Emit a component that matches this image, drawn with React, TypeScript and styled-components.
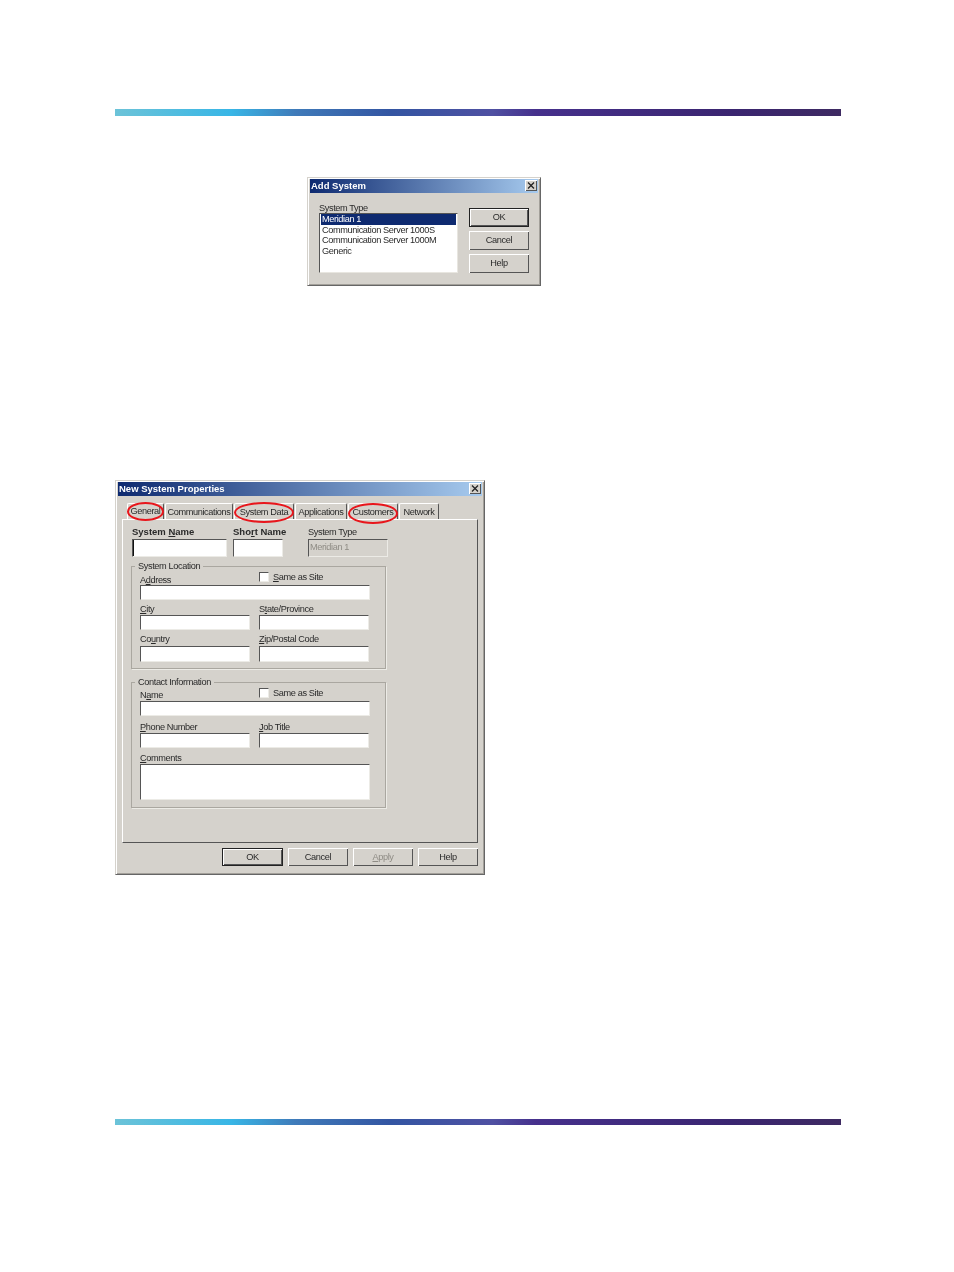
import React from 'react'
import styled, { createGlobalStyle } from 'styled-components'

const face = '#d5d2cc'

const GlobalStyle = createGlobalStyle`
    html, body {
        margin: 0;
        background: #fff;
    }
    body {
        font-family: 'Liberation Sans', Arial, sans-serif;
        font-size: 9.2px;
        letter-spacing: -0.38px;
        color: #2a2a2a;
    }
`

const Page = styled.div`
    display: flex;
    flex-direction: column;
    box-sizing: border-box;
    width: 954px;
    height: 1272px;
    padding: 109px 113px 0 115px;
`

const Bar = styled.div<{ $top: number; $h: number }>`
    flex-shrink: 0;
    height: ${(p) => p.$h}px;
    margin-top: ${(p) => p.$top}px;
    background: linear-gradient(
        90deg,
        #6cc3d8 0%,
        #38b6e6 16%,
        #3f7ab9 25%,
        #3355a2 38%,
        #4f50a2 52%,
        #46308c 58%,
        #3a2570 85%,
        #3e2a62 100%
    );
`

const Dialog = styled.div<{ $w: number; $h: number; $left: number; $top: number }>`
    box-sizing: border-box;
    flex-shrink: 0;
    width: ${(p) => p.$w}px;
    height: ${(p) => p.$h}px;
    margin: ${(p) => p.$top}px 0 0 ${(p) => p.$left}px;
    padding: 1px 2px 2px;
    background: ${face};
    border-top: 1px solid ${face};
    border-left: 1px solid ${face};
    border-right: 1px solid #666;
    border-bottom: 1px solid #666;
    box-shadow: inset 1px 1px 0 #fff, inset -1px -1px 0 #a3a09a;
    filter: blur(0.3px);
`

const TitleBar = styled.div`
    display: flex;
    align-items: center;
    justify-content: space-between;
    box-sizing: border-box;
    height: 14px;
    padding: 0 1px 1px;
    background: linear-gradient(90deg, #0e2a70 0%, #a6caee 100%);
    color: #fff;
    font-weight: 700;
    font-size: 9.5px;
    letter-spacing: 0;
`

const CloseBox = styled.div`
    display: flex;
    align-items: center;
    justify-content: center;
    width: 12px;
    height: 11px;
    background: ${face};
    box-shadow: inset 1px 1px 0 #fff, inset -1px -1px 0 #555;
`

const CloseButton = () => (
    <CloseBox>
        <svg width="8" height="7" viewBox="0 0 8 7">
            <path d="M1 0.5 L7 6.5 M7 0.5 L1 6.5" stroke="#222" strokeWidth="1.3" fill="none" />
        </svg>
    </CloseBox>
)

const AddBody = styled.div`
    display: flex;
    padding: 10px 0 0 9px;
`

const ListColumn = styled.div`
    display: flex;
    flex-direction: column;
    width: 139px;
`

const ListCaption = styled.div`
    height: 10px;
    line-height: 10px;
`

const ListBox = styled.div`
    box-sizing: border-box;
    height: 60px;
    padding: 0 1px;
    background: #fff;
    border-top: 1px solid #555;
    border-left: 1px solid #555;
    border-right: 1px solid #e8e6e0;
    border-bottom: 1px solid #e8e6e0;
`

const ListItem = styled.div<{ $selected?: boolean }>`
    height: 10.7px;
    line-height: 10.7px;
    padding-left: 1px;
    white-space: nowrap;
    background: ${(p) => (p.$selected ? '#0e2a70' : 'transparent')};
    color: ${(p) => (p.$selected ? '#fff' : '#2a2a2a')};
`

const ButtonColumn = styled.div`
    display: flex;
    flex-direction: column;
    gap: 4px;
    margin: 5px 0 0 11px;
`

const Button = styled.div<{ $default?: boolean; $disabled?: boolean; $w?: number; $h?: number }>`
    display: flex;
    align-items: center;
    justify-content: center;
    box-sizing: border-box;
    width: ${(p) => p.$w ?? 60}px;
    height: ${(p) => p.$h ?? 19}px;
    padding-bottom: 1px;
    background: ${face};
    color: ${(p) => (p.$disabled ? '#8f8c85' : '#2a2a2a')};
    border: ${(p) => (p.$default ? '1px solid #222' : 'none')};
    box-shadow: inset 1px 1px 0 #fff, inset -1px -1px 0 #555;
`

const Tabs = styled.div`
    display: flex;
    height: 16px;
    margin: 7px 0 0 9px;
`

const Tab = styled.div<{ $w: number; $ring?: [number, number]; $active?: boolean }>`
    position: relative;
    display: flex;
    align-items: center;
    justify-content: center;
    box-sizing: border-box;
    width: ${(p) => p.$w}px;
    margin-right: 1px;
    padding-bottom: ${(p) => (p.$active ? 2 : 0)}px;
    white-space: nowrap;
    background: ${face};
    border-top: 1px solid #fff;
    border-left: 1px solid #fff;
    border-right: 1px solid #555;
    border-radius: 2px 2px 0 0;

    ${(p) =>
        p.$ring &&
        `
        &::after {
            content: '';
            position: absolute;
            top: ${p.$ring[0]}px;
            bottom: ${p.$ring[1]}px;
            left: -1px;
            right: -1px;
            border: 2px solid #e8161c;
            border-radius: 50%;
        }
    `}
`

const Panel = styled.div`
    box-sizing: border-box;
    height: 324px;
    margin-left: 4px;
    width: 356px;
    padding: 6px 0 0 8px;
    border-top: 1px solid #fff;
    border-left: 1px solid #fff;
    border-right: 1px solid #555;
    border-bottom: 1px solid #555;
`

const TopRow = styled.div`
    display: flex;
    margin-left: 1px;
`

const Field = styled.div<{ $w: number; $gap?: number }>`
    display: flex;
    flex-direction: column;
    width: ${(p) => p.$w}px;
    margin-right: ${(p) => p.$gap ?? 0}px;
`

const Label = styled.label<{ $h?: number; $bold?: boolean; $lift?: number }>`
    display: block;
    height: ${(p) => p.$h ?? 15}px;
    line-height: 10px;
    padding-top: ${(p) => (p.$h ?? 15) - 11 - (p.$lift ?? 0)}px;
    box-sizing: border-box;
    font-weight: ${(p) => (p.$bold ? 700 : 400)};
    font-size: ${(p) => (p.$bold ? 9.5 : 9.2)}px;
    letter-spacing: ${(p) => (p.$bold ? 0 : -0.38)}px;
    white-space: nowrap;
`

const Input = styled.div<{ $h?: number; $w?: number; $disabled?: boolean; $caret?: boolean }>`
    box-sizing: border-box;
    width: ${(p) => (p.$w ? `${p.$w}px` : 'auto')};
    height: ${(p) => p.$h ?? 15}px;
    padding: 1px 1px;
    line-height: 12px;
    color: #8f8c85;
    background: ${(p) => (p.$disabled ? face : '#fff')};
    border-top: 1px solid #555;
    border-left: 1px solid #555;
    border-right: 1px solid #ecebe6;
    border-bottom: 1px solid #ecebe6;
    box-shadow: ${(p) => (p.$caret ? 'inset 1px 0 0 #111' : 'none')};
`

const Group = styled.fieldset<{ $h: number; $top: number }>`
    box-sizing: border-box;
    width: 255px;
    height: ${(p) => p.$h}px;
    margin: ${(p) => p.$top}px 0 0;
    padding: 0 0 0 8px;
    border: 1px solid #aaa7a0;
    box-shadow: 1px 1px 0 #ecebe6;
`

const Legend = styled.legend`
    height: 12px;
    line-height: 12px;
    margin-left: -5px;
    padding: 0 3px;
`

const SiteRow = styled.div`
    display: flex;
    justify-content: space-between;
    height: 13px;
    width: 230px;
`

const SiteLabel = styled.div`
    display: flex;
    align-items: flex-start;
    width: 111px;
    line-height: 10px;
`

const Check = styled.span`
    box-sizing: border-box;
    width: 10px;
    height: 10px;
    margin-right: 4px;
    background: #fff;
    border-top: 1px solid #555;
    border-left: 1px solid #555;
    border-right: 1px solid #ecebe6;
    border-bottom: 1px solid #ecebe6;
`

const Pair = styled.div`
    display: flex;
    gap: 9px;
`

const Footer = styled.div`
    display: flex;
    justify-content: flex-end;
    gap: 5px;
    width: 360px;
    margin-top: 5px;
`

const LocationGroup = () => (
    <Group $h={109} $top={3}>
        <Legend>System Location</Legend>
        <SiteRow>
            <Label $h={13} $lift={-1}>A<u>d</u>dress</Label>
            <SiteLabel>
                <Check />
                <span><u>S</u>ame as Site</span>
            </SiteLabel>
        </SiteRow>
        <Input $w={230} />
        <Pair>
            <Field $w={110}>
                <Label><u>C</u>ity</Label>
                <Input />
            </Field>
            <Field $w={110}>
                <Label>S<u>t</u>ate/Province</Label>
                <Input />
            </Field>
        </Pair>
        <Pair>
            <Field $w={110}>
                <Label $h={16} $lift={1}>Co<u>u</u>ntry</Label>
                <Input $h={16} />
            </Field>
            <Field $w={110}>
                <Label $h={16} $lift={1}><u>Z</u>ip/Postal Code</Label>
                <Input $h={16} />
            </Field>
        </Pair>
    </Group>
)

const ContactGroup = () => (
    <Group $h={132} $top={7}>
        <Legend>Contact Information</Legend>
        <SiteRow>
            <Label $h={13}>N<u>a</u>me</Label>
            <SiteLabel>
                <Check />
                <span>Same as Site</span>
            </SiteLabel>
        </SiteRow>
        <Input $w={230} />
        <Pair>
            <Field $w={110}>
                <Label $h={17}><u>P</u>hone Number</Label>
                <Input />
            </Field>
            <Field $w={110}>
                <Label $h={17}><u>J</u>ob Title</Label>
                <Input />
            </Field>
        </Pair>
        <Field $w={230}>
            <Label $h={16}><u>C</u>omments</Label>
            <Input $h={36} />
        </Field>
    </Group>
)

export default function App() {
    return (
        <Page>
            <GlobalStyle />
            <Bar $top={0} $h={7} />

            <Dialog $w={234} $h={109} $left={192} $top={61}>
                <TitleBar>
                    Add System
                    <CloseButton />
                </TitleBar>
                <AddBody>
                    <ListColumn>
                        <ListCaption>System Type</ListCaption>
                        <ListBox>
                            <ListItem $selected>Meridian 1</ListItem>
                            <ListItem>Communication Server 1000S</ListItem>
                            <ListItem>Communication Server 1000M</ListItem>
                            <ListItem>Generic</ListItem>
                        </ListBox>
                    </ListColumn>
                    <ButtonColumn>
                        <Button $default>OK</Button>
                        <Button>Cancel</Button>
                        <Button>Help</Button>
                    </ButtonColumn>
                </AddBody>
            </Dialog>

            <Dialog $w={370} $h={395} $left={0} $top={194}>
                <TitleBar>
                    New System Properties
                    <CloseButton />
                </TitleBar>
                <Tabs>
                    <Tab $w={37} $ring={[-2, -2]} $active>General</Tab>
                    <Tab $w={68}>Communications</Tab>
                    <Tab $w={60} $ring={[-2, -4]}>System Data</Tab>
                    <Tab $w={52}>Applications</Tab>
                    <Tab $w={50} $ring={[-1, -5]}>Customers</Tab>
                    <Tab $w={40}>Network</Tab>
                </Tabs>
                <Panel>
                    <TopRow>
                        <Field $w={95} $gap={6}>
                            <Label $h={13} $bold $lift={1}>System <u>N</u>ame</Label>
                            <Input $h={18} $caret />
                        </Field>
                        <Field $w={50} $gap={25}>
                            <Label $h={13} $bold $lift={1}>Sho<u>r</u>t Name</Label>
                            <Input $h={18} />
                        </Field>
                        <Field $w={80}>
                            <Label $h={13} $lift={1}>System Type</Label>
                            <Input $h={18} $disabled>Meridian 1</Input>
                        </Field>
                    </TopRow>
                    <LocationGroup />
                    <ContactGroup />
                </Panel>
                <Footer>
                    <Button $default $w={61} $h={18}>OK</Button>
                    <Button $h={18}>Cancel</Button>
                    <Button $h={18} $disabled><u>A</u>pply</Button>
                    <Button $h={18}>Help</Button>
                </Footer>
            </Dialog>

            <Bar $top={244} $h={6} />
        </Page>
    )
}
